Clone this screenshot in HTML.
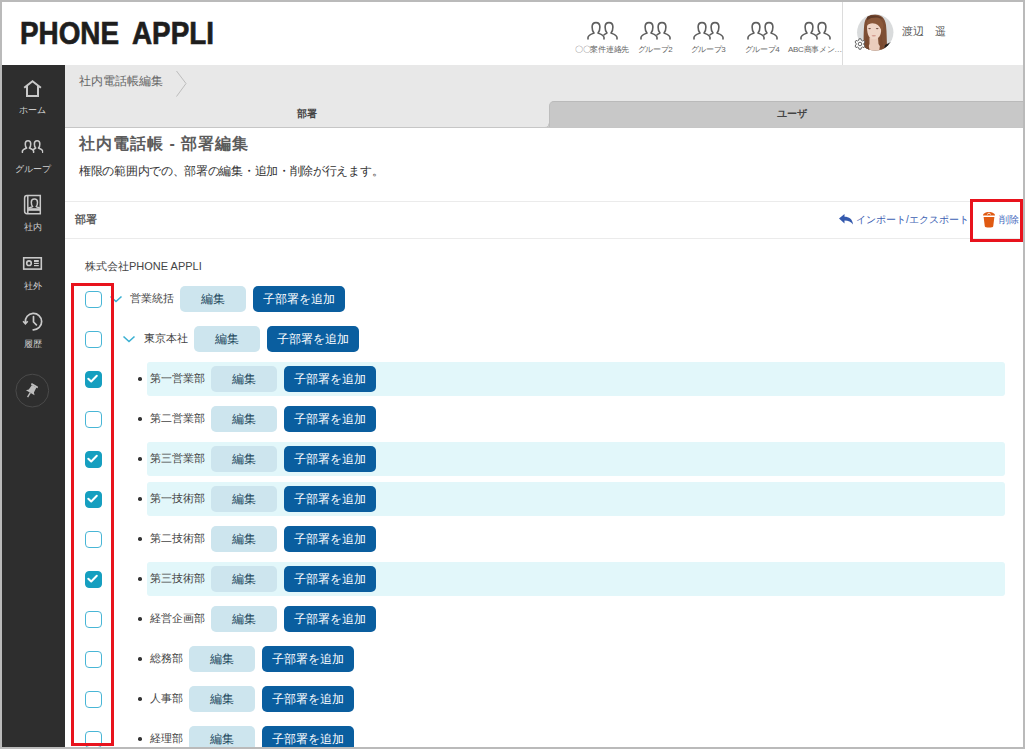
<!DOCTYPE html>
<html><head><meta charset="utf-8">
<style>
*{box-sizing:border-box;margin:0;padding:0}
html,body{width:1025px;height:749px;overflow:hidden;background:#fff}
body{position:relative;font-family:"Liberation Sans",sans-serif;color:#333}
.a{position:absolute}
svg{display:block}
#frame{left:0;top:0;width:1025px;height:749px;border:2px solid #bababa;z-index:50}
.logo{top:15px;font-size:32px;line-height:36px;font-weight:bold;color:#1e1e1e;white-space:nowrap;transform:scaleX(0.87);transform-origin:0 0;-webkit-text-stroke:0.7px #1e1e1e}
#hdiv{left:842px;top:0;width:1px;height:65px;background:#dcdcdc}
.hg{top:45px;width:70px;margin-left:-35px;color:#666;font-size:8px;line-height:10px;white-space:nowrap;text-align:center;letter-spacing:-0.3px}
.hi{top:19.5px;margin-left:-16px}
#side{left:0;top:65px;width:65px;height:684px;background:#2e2e2e}
.nl{left:0;width:65px;text-align:center;color:#d0d0d0;font-size:9px;line-height:11px;white-space:nowrap}
#crumbbar{left:65px;top:65px;width:960px;height:63px;background:#e8e8e8}
#tabline{left:65px;top:127px;width:960px;height:1px;background:#c6c6c6}
#tab2{left:549px;top:101px;width:490px;height:27px;background:#c8c8c8;border-top:1.5px solid #bababa;border-left:1px solid #bdbdbd;border-radius:5px 0 0 0}
.tabt{font-size:10px;line-height:12px;font-weight:bold;color:#444;white-space:nowrap}
#crumb{left:79px;top:74px;font-size:12px;line-height:14px;color:#666;white-space:nowrap}
#title{left:79px;top:135px;font-size:16px;line-height:18px;font-weight:bold;color:#5c5c5c;white-space:nowrap;letter-spacing:1px;word-spacing:0px}
#desc{left:79px;top:164px;font-size:11.5px;letter-spacing:-0.3px;line-height:14px;color:#333;white-space:nowrap}
.hr{left:65px;width:958px;height:1px;background:#ebebeb}
#sec{left:75px;top:213px;font-size:11px;line-height:13px;font-weight:bold;color:#606060;white-space:nowrap}
#imp{left:856px;top:213px;font-size:10px;line-height:13px;color:#3d5fb3;white-space:nowrap}
#del{left:999px;top:213px;font-size:10px;line-height:13px;color:#4a6cc0;white-space:nowrap}
#co{left:85px;top:260px;font-size:11px;line-height:13px;color:#444;white-space:nowrap}
.hl{left:147px;width:858px;height:34px;background:#e2f7fa;border-radius:3px}
.cb{left:85px;width:17px;height:17px;border:1.8px solid #48b6d6;border-radius:4px;background:#fff}
.cb.on{background:#169fc0;border-color:#169fc0}
.cb.on svg{margin:-1.8px}
.dot{left:138.3px;width:3.6px;height:3.6px;border-radius:50%;background:#333;margin-top:0.2px}
.lab{font-size:11px;line-height:18px;color:#444;white-space:nowrap}
.be{width:66px;height:26px;border-radius:5px;background:#cde5ee;color:#1f4a5e;font-size:12px;line-height:26px;text-align:center;white-space:nowrap}
.ba{width:92px;height:26px;border-radius:5px;background:#0a5e9f;color:#fff;font-size:12px;line-height:26px;text-align:center;white-space:nowrap}
.redbox{border:3px solid #e8131d;z-index:40}
</style></head><body>
<div id="frame" class="a"></div>
<div class="a logo" style="left:20px">PHONE</div><div class="a logo" style="left:132px">APPLI</div>
<div class="a hi" style="left:602px"><svg width="32" height="20" viewBox="-1 -1 32 20"><g fill="none" stroke="#5e5e5e" stroke-width="1.6" stroke-linecap="round" stroke-linejoin="round">
<path d="M1,18 V16.6 C1,14.2 4.5,13.2 7,12 C5.3,10.2 5.1,8 5.1,6 C5.1,3.2 6.8,1.6 9,1.6 C11.2,1.6 12.9,3.2 12.9,6 C12.9,8 12.7,10.2 11,12 C13.5,13.2 17,14.2 17,16.6 V18"/>
<path d="M17,13.8 C18.2,13 19.3,12.6 20,12 C18.3,10.2 18.1,8 18.1,6 C18.1,3.2 19.8,1.6 22,1.6 C24.2,1.6 25.9,3.2 25.9,6 C25.9,8 25.7,10.2 24,12 C26.5,13.2 30,14.2 30,16.6 V18"/>
</g></svg></div>
<div class="a hg" style="left:602px">〇〇案件連絡先</div>
<div class="a hi" style="left:655px"><svg width="32" height="20" viewBox="-1 -1 32 20"><g fill="none" stroke="#5e5e5e" stroke-width="1.6" stroke-linecap="round" stroke-linejoin="round">
<path d="M1,18 V16.6 C1,14.2 4.5,13.2 7,12 C5.3,10.2 5.1,8 5.1,6 C5.1,3.2 6.8,1.6 9,1.6 C11.2,1.6 12.9,3.2 12.9,6 C12.9,8 12.7,10.2 11,12 C13.5,13.2 17,14.2 17,16.6 V18"/>
<path d="M17,13.8 C18.2,13 19.3,12.6 20,12 C18.3,10.2 18.1,8 18.1,6 C18.1,3.2 19.8,1.6 22,1.6 C24.2,1.6 25.9,3.2 25.9,6 C25.9,8 25.7,10.2 24,12 C26.5,13.2 30,14.2 30,16.6 V18"/>
</g></svg></div>
<div class="a hg" style="left:655px">グループ2</div>
<div class="a hi" style="left:708px"><svg width="32" height="20" viewBox="-1 -1 32 20"><g fill="none" stroke="#5e5e5e" stroke-width="1.6" stroke-linecap="round" stroke-linejoin="round">
<path d="M1,18 V16.6 C1,14.2 4.5,13.2 7,12 C5.3,10.2 5.1,8 5.1,6 C5.1,3.2 6.8,1.6 9,1.6 C11.2,1.6 12.9,3.2 12.9,6 C12.9,8 12.7,10.2 11,12 C13.5,13.2 17,14.2 17,16.6 V18"/>
<path d="M17,13.8 C18.2,13 19.3,12.6 20,12 C18.3,10.2 18.1,8 18.1,6 C18.1,3.2 19.8,1.6 22,1.6 C24.2,1.6 25.9,3.2 25.9,6 C25.9,8 25.7,10.2 24,12 C26.5,13.2 30,14.2 30,16.6 V18"/>
</g></svg></div>
<div class="a hg" style="left:708px">グループ3</div>
<div class="a hi" style="left:762px"><svg width="32" height="20" viewBox="-1 -1 32 20"><g fill="none" stroke="#5e5e5e" stroke-width="1.6" stroke-linecap="round" stroke-linejoin="round">
<path d="M1,18 V16.6 C1,14.2 4.5,13.2 7,12 C5.3,10.2 5.1,8 5.1,6 C5.1,3.2 6.8,1.6 9,1.6 C11.2,1.6 12.9,3.2 12.9,6 C12.9,8 12.7,10.2 11,12 C13.5,13.2 17,14.2 17,16.6 V18"/>
<path d="M17,13.8 C18.2,13 19.3,12.6 20,12 C18.3,10.2 18.1,8 18.1,6 C18.1,3.2 19.8,1.6 22,1.6 C24.2,1.6 25.9,3.2 25.9,6 C25.9,8 25.7,10.2 24,12 C26.5,13.2 30,14.2 30,16.6 V18"/>
</g></svg></div>
<div class="a hg" style="left:762px">グループ4</div>
<div class="a hi" style="left:815px"><svg width="32" height="20" viewBox="-1 -1 32 20"><g fill="none" stroke="#5e5e5e" stroke-width="1.6" stroke-linecap="round" stroke-linejoin="round">
<path d="M1,18 V16.6 C1,14.2 4.5,13.2 7,12 C5.3,10.2 5.1,8 5.1,6 C5.1,3.2 6.8,1.6 9,1.6 C11.2,1.6 12.9,3.2 12.9,6 C12.9,8 12.7,10.2 11,12 C13.5,13.2 17,14.2 17,16.6 V18"/>
<path d="M17,13.8 C18.2,13 19.3,12.6 20,12 C18.3,10.2 18.1,8 18.1,6 C18.1,3.2 19.8,1.6 22,1.6 C24.2,1.6 25.9,3.2 25.9,6 C25.9,8 25.7,10.2 24,12 C26.5,13.2 30,14.2 30,16.6 V18"/>
</g></svg></div>
<div class="a hg" style="left:815px">ABC商事メン…</div>
<div id="hdiv" class="a"></div>
<svg class="a" style="left:854px;top:12px" width="42" height="42" viewBox="0 0 42 42">
<defs><clipPath id="cc"><circle cx="21.25" cy="20.35" r="18.2"/></clipPath></defs>
<circle cx="21.25" cy="20.35" r="18.2" fill="#d9dbdc"/>
<g clip-path="url(#cc)">
<path d="M9.8,40 C9.5,30 9.5,20 10.2,13 C11,5.5 15,2.6 21,2.6 C27,2.6 31,6 32,13 C33,21 32.5,30 33.5,40 Z" fill="#7e4f35"/>
<path d="M15.5,25.5 L24,25.5 L24.5,32 C26,34 27.5,36.5 28,40 L13,40 C13.5,36.5 14.5,34 15.5,32 Z" fill="#ebcdbd"/>
<path d="M13,15 C13,11.5 16,10.5 20,10.5 C24.5,10.5 27.2,13 27.2,17.5 C27.2,23.5 24.5,27.3 20,27.3 C15.5,27.3 13,23 13,15 Z" fill="#f0d6c8"/>
<path d="M12.6,14 C13,7 16.5,5 21,5.2 C26,5.5 29,9 29.5,14 L28,21 C27,16 25,13 21.5,11.8 C18.5,10.8 15,11 12.6,14 Z" fill="#8a583a"/>
<path d="M13,5 C16,3 24,2.5 29,7 C25,5 18,4.5 13,8 Z" fill="#5e3a28"/>
<ellipse cx="15.6" cy="16.6" rx="1.4" ry="0.6" fill="#765548"/>
<ellipse cx="23.2" cy="16.6" rx="1.4" ry="0.6" fill="#765548"/>
<ellipse cx="19.8" cy="23.8" rx="2.2" ry="0.8" fill="#d49a8e"/>
<path d="M9.8,40 C10,33 11,28 13.2,22 C13.5,28 14.5,33 16,40 Z" fill="#7a4a30"/>
<path d="M27.2,18 C27.5,26 28.5,33 31,40 L25,40 C26,34 27,27 27.2,18 Z" fill="#7a4a30"/>
<path d="M31,33 C33,32 35,31 37,30 L40,42 L29,42 Z" fill="#1d1d1d"/>
<path d="M10,36 L15,37 L13.5,42 L8,42 Z" fill="#2a2a2a"/>
</g>
</svg>
<svg class="a" style="left:854px;top:38px" width="12" height="12" viewBox="0 0 12 12"><g fill="#fff" stroke="#666" stroke-width="1"><path d="M5,0.8 H7 L7.3,2.3 L8.6,3 L10,2.4 L11,4.1 L9.9,5.1 V6.9 L11,7.9 L10,9.6 L8.6,9 L7.3,9.7 L7,11.2 H5 L4.7,9.7 L3.4,9 L2,9.6 L1,7.9 L2.1,6.9 V5.1 L1,4.1 L2,2.4 L3.4,3 L4.7,2.3 Z"/><circle cx="6" cy="6" r="1.8"/></g></svg>
<div class="a" style="left:902px;top:25px;font-size:11px;line-height:13px;color:#555;white-space:nowrap">渡辺　遥</div>
<div id="side" class="a"></div>
<svg class="a" style="left:20px;top:76px" width="25" height="24" viewBox="20 76 25 24"><g fill="none" stroke="#c9c9c9" stroke-width="2" stroke-linejoin="miter"><path d="M24.2,87.8 L32.5,81.2 L40.9,87.8"/><path d="M27,85.2 V95.9 H38 V85.2"/></g></svg>
<div class="a nl" style="top:104.5px">ホーム</div>
<div class="a" style="left:21px;top:139px;transform:scale(0.7);transform-origin:0 0"><svg width="32" height="20" viewBox="-1 -1 32 20"><g fill="none" stroke="#c9c9c9" stroke-width="2.2" stroke-linecap="round" stroke-linejoin="round">
<path d="M1,18 V16.6 C1,14.2 4.5,13.2 7,12 C5.3,10.2 5.1,8 5.1,6 C5.1,3.2 6.8,1.6 9,1.6 C11.2,1.6 12.9,3.2 12.9,6 C12.9,8 12.7,10.2 11,12 C13.5,13.2 17,14.2 17,16.6 V18"/>
<path d="M17,13.8 C18.2,13 19.3,12.6 20,12 C18.3,10.2 18.1,8 18.1,6 C18.1,3.2 19.8,1.6 22,1.6 C24.2,1.6 25.9,3.2 25.9,6 C25.9,8 25.7,10.2 24,12 C26.5,13.2 30,14.2 30,16.6 V18"/>
</g></svg></div>
<div class="a nl" style="top:164px">グループ</div>
<svg class="a" style="left:22px;top:193px" width="21" height="24" viewBox="22 193 21 24"><g fill="none" stroke="#c9c9c9" stroke-width="1.5"><path d="M27,195.5 H40.3 V213.7 H27 C25.5,213.7 24.6,212.8 24.6,211.3 V198 C24.6,196.5 25.5,195.5 27,195.5 Z"/><path d="M27.8,195.5 V213.7"/><path d="M28,208.3 C30,207.5 32.3,207.3 32.6,206.5 C31.6,205.5 31.3,204 31.3,202.2 C31.3,200.2 32.6,199.1 34.4,199.1 C36.2,199.1 37.5,200.2 37.5,202.2 C37.5,204 37.2,205.5 36.2,206.5 C36.5,207.3 38.8,207.5 40.3,208.3"/></g><rect x="27.8" y="208.2" width="12.5" height="2.6" fill="#c9c9c9"/></svg>
<div class="a nl" style="top:222px">社内</div>
<svg class="a" style="left:21px;top:255px" width="23" height="17" viewBox="21 255 23 17"><g fill="none" stroke="#c9c9c9" stroke-width="1.6"><rect x="23.7" y="257.8" width="17.6" height="11.3"/><circle cx="29" cy="263.2" r="2.3"/></g><g fill="#c9c9c9"><rect x="34" y="260" width="4.8" height="2"/><rect x="34" y="262.8" width="4.8" height="1.2"/><rect x="34" y="265" width="4.8" height="1.2"/></g></svg>
<div class="a nl" style="top:281px">社外</div>
<svg class="a" style="left:20px;top:309px" width="26" height="26" viewBox="20 309 26 26"><g fill="none" stroke="#c9c9c9" stroke-width="1.7" stroke-linecap="round"><path d="M33.2,329.8 A8.2,8.2 0 1 0 25.3,322.5"/><path d="M33.5,316.6 V322 L36.4,324.8"/><path d="M23.1,321.2 L25.4,323.8 L27.7,321.2" stroke-linecap="butt"/></g></svg>
<div class="a nl" style="top:339px">履歴</div>
<svg class="a" style="left:14px;top:372px" width="37" height="37" viewBox="14 372 37 37"><circle cx="32.3" cy="390.6" r="16.4" fill="none" stroke="#4a4a4a" stroke-width="1"/><g transform="translate(31.6 390.5) rotate(31)" fill="#bdbdbd"><rect x="-3.8" y="-6.6" width="7.6" height="1.9" rx="0.6"/><path d="M-2.6,-5 H2.6 L3,0.5 L5,2.6 H-5 L-3,0.5 Z"/><rect x="-0.7" y="2.5" width="1.4" height="5.3"/></g></svg>
<div id="crumbbar" class="a"></div>
<div id="crumb" class="a">社内電話帳編集</div>
<svg class="a" style="left:174px;top:70px" width="14" height="28" viewBox="0 0 14 28"><path d="M2.5,1 L12,13.5 L2.5,26.5" fill="none" stroke="#bdbdbd" stroke-width="1"/></svg>
<div id="tab2" class="a"></div>
<svg class="a" style="left:544px;top:122px" width="6" height="6" viewBox="0 0 6 6"><path d="M0.8,6 Q5,6 5,1.5 V6 Z" fill="#c8c8c8"/><path d="M0.8,5.5 Q5,5.5 5,1.5" fill="none" stroke="#bdbdbd" stroke-width="1"/></svg>
<div id="tabline" class="a"></div>
<div class="a tabt" style="left:297px;top:108px">部署</div>
<div class="a tabt" style="left:777px;top:108px">ユーザ</div>
<div id="title" class="a">社内電話帳 - 部署編集</div>
<div id="desc" class="a">権限の範囲内での、部署の編集・追加・削除が行えます。</div>
<div class="a hr" style="top:201px"></div>
<div class="a hr" style="top:238px"></div>
<div id="sec" class="a">部署</div>
<svg class="a" style="left:838px;top:213px" width="16" height="13" viewBox="0 0 16 13"><path d="M1,5.5 L6.5,1 V3.8 C11,3.8 14.5,6 15,11.5 C13,8.8 10.5,7.6 6.5,7.6 V10.5 Z" fill="#3459ad"/></svg>
<div id="imp" class="a">インポート/エクスポート</div>
<svg class="a" style="left:982px;top:211px" width="14" height="18" viewBox="0 0 14 18"><path d="M1,4.5 C1,2.3 4,1 7,1 C10,1 13,2.3 13,4.5 Z" fill="#e05a12"/><path d="M5.2,3.4 L7,1.9 L8.8,3.4" fill="none" stroke="#fff" stroke-width="0.9"/><path d="M1.6,6 H12.4 L11.2,15.2 C11,16.2 9.5,16.6 7,16.6 C4.5,16.6 3,16.2 2.8,15.2 Z" fill="#e05a12"/></svg>
<div id="del" class="a">削除</div>
<div id="co" class="a">株式会社PHONE APPLI</div>
<div class="a cb" style="top:290.5px"></div>
<svg class="a" style="left:109px;top:294px" width="14" height="10" viewBox="0 0 14 10"><path d="M1.5,2.5 L7,7.5 L12.5,2.5" fill="none" stroke="#3ab0d2" stroke-width="1.6"/></svg>
<div class="a lab" style="left:130px;top:289px">営業統括</div>
<div class="a be" style="left:180px;top:286px">編集</div>
<div class="a ba" style="left:253px;top:286px">子部署を追加</div>
<div class="a cb" style="top:330.5px"></div>
<svg class="a" style="left:122px;top:334px" width="14" height="10" viewBox="0 0 14 10"><path d="M1.5,2.5 L7,7.5 L12.5,2.5" fill="none" stroke="#3ab0d2" stroke-width="1.6"/></svg>
<div class="a lab" style="left:144px;top:329px">東京本社</div>
<div class="a be" style="left:194px;top:326px">編集</div>
<div class="a ba" style="left:267px;top:326px">子部署を追加</div>
<div class="a hl" style="top:362px"></div>
<div class="a cb on" style="top:370.5px"><svg width="17" height="17" viewBox="0 0 17 17"><path d="M4.3,8.8 L7.2,11.5 L12.8,5.8" fill="none" stroke="#fff" stroke-width="2" stroke-linecap="round" stroke-linejoin="round"/></svg></div>
<div class="a dot" style="top:377px"></div>
<div class="a lab" style="left:150px;top:369px">第一営業部</div>
<div class="a be" style="left:211px;top:366px">編集</div>
<div class="a ba" style="left:284px;top:366px">子部署を追加</div>
<div class="a cb" style="top:410.5px"></div>
<div class="a dot" style="top:417px"></div>
<div class="a lab" style="left:150px;top:409px">第二営業部</div>
<div class="a be" style="left:211px;top:406px">編集</div>
<div class="a ba" style="left:284px;top:406px">子部署を追加</div>
<div class="a hl" style="top:442px"></div>
<div class="a cb on" style="top:450.5px"><svg width="17" height="17" viewBox="0 0 17 17"><path d="M4.3,8.8 L7.2,11.5 L12.8,5.8" fill="none" stroke="#fff" stroke-width="2" stroke-linecap="round" stroke-linejoin="round"/></svg></div>
<div class="a dot" style="top:457px"></div>
<div class="a lab" style="left:150px;top:449px">第三営業部</div>
<div class="a be" style="left:211px;top:446px">編集</div>
<div class="a ba" style="left:284px;top:446px">子部署を追加</div>
<div class="a hl" style="top:482px"></div>
<div class="a cb on" style="top:490.5px"><svg width="17" height="17" viewBox="0 0 17 17"><path d="M4.3,8.8 L7.2,11.5 L12.8,5.8" fill="none" stroke="#fff" stroke-width="2" stroke-linecap="round" stroke-linejoin="round"/></svg></div>
<div class="a dot" style="top:497px"></div>
<div class="a lab" style="left:150px;top:489px">第一技術部</div>
<div class="a be" style="left:211px;top:486px">編集</div>
<div class="a ba" style="left:284px;top:486px">子部署を追加</div>
<div class="a cb" style="top:530.5px"></div>
<div class="a dot" style="top:537px"></div>
<div class="a lab" style="left:150px;top:529px">第二技術部</div>
<div class="a be" style="left:211px;top:526px">編集</div>
<div class="a ba" style="left:284px;top:526px">子部署を追加</div>
<div class="a hl" style="top:562px"></div>
<div class="a cb on" style="top:570.5px"><svg width="17" height="17" viewBox="0 0 17 17"><path d="M4.3,8.8 L7.2,11.5 L12.8,5.8" fill="none" stroke="#fff" stroke-width="2" stroke-linecap="round" stroke-linejoin="round"/></svg></div>
<div class="a dot" style="top:577px"></div>
<div class="a lab" style="left:150px;top:569px">第三技術部</div>
<div class="a be" style="left:211px;top:566px">編集</div>
<div class="a ba" style="left:284px;top:566px">子部署を追加</div>
<div class="a cb" style="top:610.5px"></div>
<div class="a dot" style="top:617px"></div>
<div class="a lab" style="left:150px;top:609px">経営企画部</div>
<div class="a be" style="left:211px;top:606px">編集</div>
<div class="a ba" style="left:284px;top:606px">子部署を追加</div>
<div class="a cb" style="top:650.5px"></div>
<div class="a dot" style="top:657px"></div>
<div class="a lab" style="left:150px;top:649px">総務部</div>
<div class="a be" style="left:189px;top:646px">編集</div>
<div class="a ba" style="left:262px;top:646px">子部署を追加</div>
<div class="a cb" style="top:690.5px"></div>
<div class="a dot" style="top:697px"></div>
<div class="a lab" style="left:150px;top:689px">人事部</div>
<div class="a be" style="left:189px;top:686px">編集</div>
<div class="a ba" style="left:262px;top:686px">子部署を追加</div>
<div class="a cb" style="top:730.5px"></div>
<div class="a dot" style="top:737px"></div>
<div class="a lab" style="left:150px;top:729px">経理部</div>
<div class="a be" style="left:189px;top:726px">編集</div>
<div class="a ba" style="left:262px;top:726px">子部署を追加</div>
<div class="a redbox" style="left:71px;top:283px;width:43px;height:463px"></div>
<div class="a redbox" style="left:970px;top:199px;width:53px;height:43px"></div>
</body></html>
